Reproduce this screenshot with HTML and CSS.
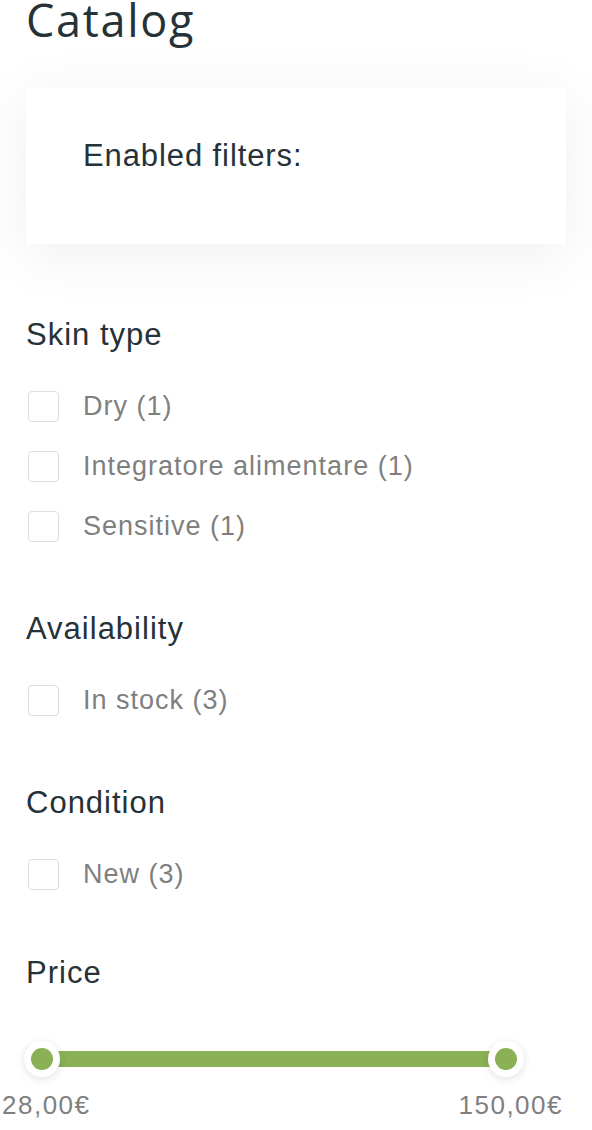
FILE: index.html
```html
<!DOCTYPE html>
<html lang="en">
<head>
<meta charset="utf-8">
<title>Catalog</title>
<link rel="stylesheet" href="styles.css">
</head>
<body>
<main class="page">
  <h1 class="title">Catalog</h1>
  <section class="active-filters">
    <p class="active-label">Enabled filters:</p>
  </section>

  <section class="facet">
    <h2 class="facet-title">Skin type</h2>
    <ul class="options">
      <li class="option"><span class="box"></span><span class="opt-label">Dry (1)</span></li>
      <li class="option"><span class="box"></span><span class="opt-label">Integratore alimentare (1)</span></li>
      <li class="option"><span class="box"></span><span class="opt-label">Sensitive (1)</span></li>
    </ul>
  </section>

  <section class="facet">
    <h2 class="facet-title">Availability</h2>
    <ul class="options">
      <li class="option"><span class="box"></span><span class="opt-label">In stock (3)</span></li>
    </ul>
  </section>

  <section class="facet">
    <h2 class="facet-title">Condition</h2>
    <ul class="options">
      <li class="option"><span class="box"></span><span class="opt-label">New (3)</span></li>
    </ul>
  </section>

  <section class="facet price">
    <h2 class="facet-title">Price</h2>
    <div class="slider">
      <div class="track"></div>
      <span class="handle handle-min"><span class="dot"></span></span>
      <span class="handle handle-max"><span class="dot"></span></span>
    </div>
    <div class="range-labels">
      <span class="range-val">28,00€</span>
      <span class="range-val">150,00€</span>
    </div>
  </section>
</main>
</body>
</html>
```
FILE: styles.css
```css
* { box-sizing: border-box; }
html, body { margin: 0; padding: 0; background: #fff; }
body { font-family: "Liberation Sans", Arial, sans-serif; color: #263238; }

.page { padding: 0 26px; width: 592px; }

.title {
  font-family: "Open Sans", sans-serif;
  font-weight: 400;
  font-size: 45px;
  line-height: 40px;
  margin: 0;
  color: #263238;
  letter-spacing: 1.7px;
}

.active-filters {
  margin-top: 48px;
  height: 156px;
  background: #fff;
  box-shadow: 0 10px 60px rgba(0, 0, 0, 0.07);
  padding: 50px 57px 0;
}
.active-label {
  margin: 0;
  font-size: 31px;
  line-height: 36px;
  letter-spacing: 0.9px;
  color: #263238;
}

.facet { margin-top: 73px; }
.facet + .facet { margin-top: 70px; }
.facet-title {
  margin: 0;
  font-weight: 400;
  font-size: 31px;
  line-height: 36px;
  color: #263238;
  letter-spacing: 1px;
}
.options {
  list-style: none;
  margin: 38px 0 0;
  padding: 0;
  display: flex;
  flex-direction: column;
  gap: 30px;
}
.option {
  display: flex;
  align-items: center;
  height: 30px;
  gap: 24px;
  padding-left: 2px;
}
.box {
  width: 31px;
  height: 31px;
  border: 1.5px solid #dedede;
  border-radius: 4px;
  flex: none;
}
.opt-label {
  font-size: 27px;
  line-height: 30px;
  color: #7f7f7f;
  letter-spacing: 1px;
}

.facet + .facet.price { margin-top: 66px; }
.price .facet-title { margin-bottom: 50px; }
.slider {
  position: relative;
  margin-left: -2px;
  width: 500px;
  height: 36px;
}
.track {
  position: absolute;
  left: 18px;
  right: 18px;
  top: 10px;
  height: 16px;
  background: #8ab155;
}
.handle {
  position: absolute;
  top: 0;
  width: 36px;
  height: 36px;
  border-radius: 50%;
  background: #fff;
  box-shadow: 0 2px 8px rgba(0, 0, 0, 0.12);
  display: flex;
  align-items: center;
  justify-content: center;
}
.handle-min { left: 0; }
.handle-max { right: 0; }
.dot {
  width: 22px;
  height: 22px;
  border-radius: 50%;
  background: #8ab155;
}
.range-labels {
  display: flex;
  justify-content: space-between;
  margin: 13px 0 0 -24px;
  width: 561px;
}
.range-val {
  font-size: 26px;
  line-height: 30px;
  color: #7f7f7f;
  letter-spacing: 1.5px;
}
```
